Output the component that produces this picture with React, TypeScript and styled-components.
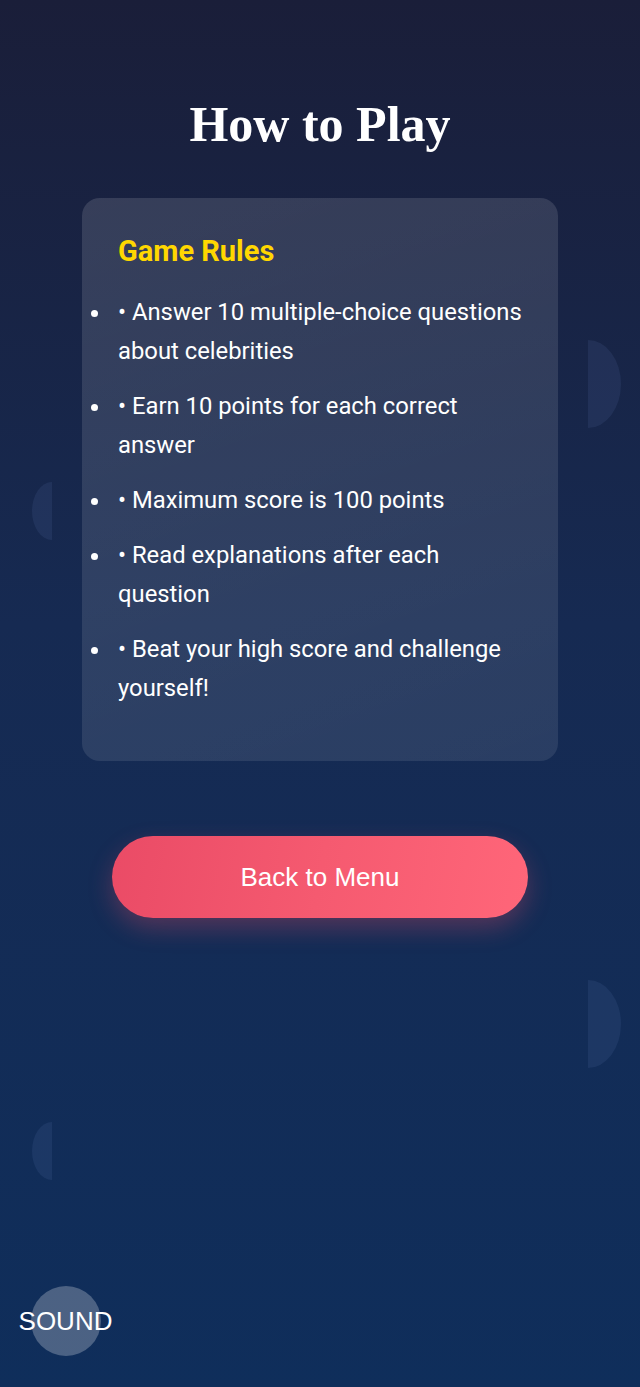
import React from "react";
import styled, { createGlobalStyle } from "styled-components";

const Global = createGlobalStyle`
  html, body { margin: 0; padding: 0; }
  body { background: #16254a; }
`;

const Page = styled.div`
  position: relative;
  width: 640px;
  height: 1387px;
  overflow: hidden;
  background: linear-gradient(180deg, #1a1e39 0%, #162a52 45%, #0f2e5b 100%);
  display: flex;
  flex-direction: column;
  align-items: center;
  font-family: Roboto, "Liberation Sans", sans-serif;
  color: #fff;
`;

const Title = styled.h1`
  margin: 89px 0 0;
  font-family: "Liberation Serif", "DejaVu Serif", serif;
  font-weight: 700;
  font-size: 50px;
  line-height: 70px;
  color: #fff;
`;

const Card = styled.div`
  margin-top: 39px;
  width: 476px;
  box-sizing: border-box;
  padding: 34px 36px 53px;
  border-radius: 18px;
  background: linear-gradient(160deg, rgba(255,255,255,0.13), rgba(255,255,255,0.09));
`;

const CardTitle = styled.h2`
  margin: 0 0 23px;
  font-size: 29px;
  font-weight: 700;
  line-height: 38px;
  color: #ffd700;
`;

const Rules = styled.ul`
  margin: 0;
  padding: 0;
  list-style: disc;
  display: flex;
  flex-direction: column;
  gap: 16px;
`;

const Rule = styled.li`
  margin-left: -6px;
  padding-left: 6px;
  font-size: 23.8px;
  line-height: 39px;
  color: #fff;
`;

const BackButton = styled.button`
  margin-top: 75px;
  width: 416px;
  height: 82px;
  border: none;
  border-radius: 41px;
  background: linear-gradient(100deg, #ea4b66 0%, #f55a70 50%, #ff6679 100%);
  box-shadow: 0 10px 24px rgba(234, 75, 102, 0.3);
  color: #fff;
  font-family: "Liberation Sans", Arial, sans-serif;
  font-size: 26px;
`;

const Bubble = styled.div<{ $top: number; $left: number; $w: number; $h: number; $side: "l" | "r" }>`
  position: absolute;
  top: ${p => p.$top}px;
  left: ${p => p.$left}px;
  width: ${p => p.$w}px;
  height: ${p => p.$h}px;
  background: rgba(120, 150, 210, 0.11);
  border-radius: ${p => (p.$side === "r" ? "0 100% 100% 0 / 0 50% 50% 0" : "100% 0 0 100% / 50% 0 0 50%")};
`;

const SoundButton = styled.button`
  position: absolute;
  left: 18px;
  top: 1286px;
  width: 95px;
  height: 70px;
  padding: 0;
  border: none;
  background: transparent;
  color: #fff;
  font-family: "Liberation Sans", Arial, sans-serif;
  font-size: 26px;
  display: flex;
  align-items: center;
  justify-content: center;
  &::before {
    content: "";
    position: absolute;
    left: 13px;
    top: 0;
    width: 70px;
    height: 70px;
    border-radius: 50%;
    background: rgba(255, 255, 255, 0.25);
  }
  span { position: relative; }
`;

const rules = [
  "• Answer 10 multiple-choice questions about celebrities",
  "• Earn 10 points for each correct answer",
  "• Maximum score is 100 points",
  "• Read explanations after each question",
  "• Beat your high score and challenge yourself!",
];

export default function App() {
  return (
    <Page>
      <Global />
      <Bubble $top={340} $left={588} $w={33} $h={88} $side="r" />
      <Bubble $top={482} $left={32} $w={20} $h={58} $side="l" />
      <Bubble $top={980} $left={588} $w={33} $h={88} $side="r" />
      <Bubble $top={1122} $left={32} $w={20} $h={58} $side="l" />
      <Title>How to Play</Title>
      <Card>
        <CardTitle>Game Rules</CardTitle>
        <Rules>
          {rules.map(r => (
            <Rule key={r}>{r}</Rule>
          ))}
        </Rules>
      </Card>
      <BackButton>Back to Menu</BackButton>
      <SoundButton>
        <span>SOUND</span>
      </SoundButton>
    </Page>
  );
}
